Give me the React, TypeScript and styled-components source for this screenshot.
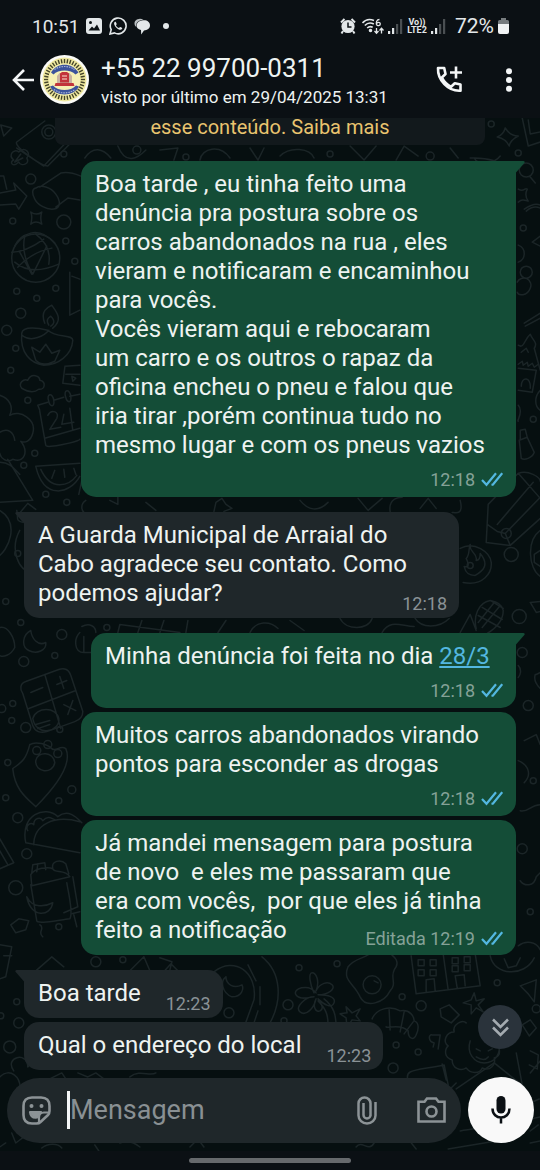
import React from 'react';
import styled, { createGlobalStyle } from 'styled-components';

const color = {
  bar: '#0b1014',
  chat: '#060f10',
  sent: '#144d37',
  received: '#1f272a',
  text: '#eef3f1',
  muted: '#8a9296',
  tick: '#53b7e0',
  doodle: '#1b2527',
};

const GlobalStyle = createGlobalStyle`
  * { box-sizing: border-box; }
  body { margin: 0; background: ${color.bar}; font-family: Roboto, "Noto Sans", sans-serif; }
  button { border: 0; padding: 0; background: none; color: inherit; cursor: pointer; display: flex; align-items: center; justify-content: center; }
  svg { display: block; flex: none; }
`;

const Screen = styled.div`
  min-height: 100vh;
  display: flex;
  flex-direction: column;
  background: ${color.bar};
  color: ${color.text};
`;

const StatusBar = styled.div`
  height: 50px;
  padding: 2px 31px 0 32px;
  display: flex;
  align-items: center;
  justify-content: space-between;
  color: #e3e7e9;
`;

const StatusGroup = styled.div<{ $gap: number; $size: number }>`
  display: flex;
  align-items: center;
  gap: ${(p) => p.$gap}px;
  font-size: ${(p) => p.$size}px;
`;

const NetworkLabel = styled.span`
  display: flex;
  flex-direction: column;
  align-items: center;
  font-size: 9px;
  line-height: 8px;
  font-weight: 700;
`;

const Header = styled.header`
  height: 68px;
  padding: 0 27px 9px 12px;
  display: flex;
  align-items: center;
`;

const BackButton = styled.button`
  width: 22px;
  margin-right: 6px;
`;

const Contact = styled.div`
  flex: 1;
  min-width: 0;
  margin-left: 12px;
  white-space: nowrap;
`;

const ContactName = styled.h1`
  margin: 0;
  font-size: 26px;
  line-height: 34px;
  font-weight: 400;
`;

const LastSeen = styled.p`
  margin: 0;
  font-size: 17px;
  line-height: 24px;
`;

const HeaderActions = styled.div`
  display: flex;
  align-items: center;
  gap: 42px;
`;

const Chat = styled.main`
  flex: 1;
  position: relative;
  overflow: hidden;
  display: flex;
  flex-direction: column;
  background: ${color.chat};
`;

const Wallpaper = styled.svg`
  position: absolute;
  top: 0;
  left: 0;
  width: 100%;
  height: 100%;
  fill: none;
  stroke: ${color.doodle};
  stroke-width: 1.5;
  stroke-linecap: round;
  stroke-linejoin: round;
`;

const Notice = styled.p`
  position: relative;
  margin: 0 55px 16px;
  padding-bottom: 9px;
  border-radius: 0 0 8px 8px;
  background: #12191c;
  color: #e9c46f;
  font-size: 20px;
  line-height: 18px;
  text-align: center;

  a { color: inherit; text-decoration: none; }
`;

const MessageList = styled.div`
  position: relative;
  flex: 1;
  padding: 0 24px;
  display: flex;
  flex-direction: column;
`;

type Placement = 'below' | 'over' | 'beside';
type Size = 'fit' | 'medium' | 'wide';

const bubbleWidth: Record<Size, string> = { fit: 'fit-content', medium: '425px', wide: '435px' };

const Bubble = styled.article<{ $sent: boolean; $tail: boolean; $size: Size; $meta: Placement }>`
  position: relative;
  align-self: ${(p) => (p.$sent ? 'flex-end' : 'flex-start')};
  width: ${(p) => bubbleWidth[p.$size]};
  max-width: 100%;
  margin-top: ${(p) => (p.$tail ? 15 : 4)}px;
  padding: 9px ${(p) => (p.$sent ? 13 : 12)}px ${(p) => (p.$meta === 'below' ? 6 : 10)}px 14px;
  border-radius: 15px;
  ${(p) => p.$tail && (p.$sent ? 'border-top-right-radius: 0;' : 'border-top-left-radius: 0;')}
  background: ${(p) => (p.$sent ? color.sent : color.received)};
  display: grid;
  grid-template-columns: ${(p) => (p.$meta === 'beside' ? 'auto auto' : '1fr')};
  column-gap: 25px;

  &:first-child { margin-top: 0; }
`;

const MessageText = styled.p`
  grid-area: 1 / 1;
  margin: 0;
  font-size: 24px;
  line-height: 29px;
  white-space: pre-wrap;

  a { color: ${color.tick}; text-underline-offset: 2px; text-decoration-thickness: 2px; }
`;

const Meta = styled.div<{ $placement: Placement; $sent: boolean }>`
  grid-area: ${(p) => ({ below: '2 / 1', over: '1 / 1', beside: '1 / 2' })[p.$placement]};
  align-self: end;
  justify-self: end;
  height: ${(p) => (p.$placement === 'below' ? 31 : 20)}px;
  margin-bottom: ${(p) => (p.$placement === 'below' ? 0 : p.$sent ? -5 : -7)}px;
  display: flex;
  align-items: flex-end;
  gap: 6px;
  font-size: 18px;
  line-height: 22px;
  color: ${(p) => (p.$sent ? '#85a297' : color.muted)};

  svg { margin-bottom: 4px; }
`;

const TailShape = styled.svg<{ $sent: boolean }>`
  position: absolute;
  top: 0;
  ${(p) => (p.$sent ? 'right: -9px;' : 'left: -9px; transform: scaleX(-1);')}
  fill: ${(p) => (p.$sent ? color.sent : color.received)};
`;

const JumpButton = styled.button`
  position: absolute;
  right: 18px;
  bottom: 102px;
  width: 44px;
  height: 44px;
  border-radius: 50%;
  background: #2a333b;
`;

const Composer = styled.form`
  position: relative;
  display: flex;
  align-items: center;
  gap: 7px;
  padding: 7px 6px 8px 7px;
`;

const InputPill = styled.div`
  flex: 1;
  min-width: 0;
  height: 65px;
  padding: 0 15px;
  border-radius: 33px;
  background: ${color.received};
  color: #8c9396;
  display: flex;
  align-items: center;
`;

const Caret = styled.span`
  flex: none;
  width: 3px;
  height: 38px;
  margin-left: 16px;
  background: #f3f5f6;
`;

const MessageInput = styled.input`
  flex: 1;
  min-width: 0;
  border: 0;
  padding: 0;
  outline: none;
  background: none;
  font: 400 27px/34px Roboto, "Noto Sans", sans-serif;
  color: ${color.text};

  &::placeholder { color: #899093; opacity: 1; }
`;

const PillActions = styled.div`
  display: flex;
  gap: 40px;
`;

const MicButton = styled.button`
  flex: none;
  width: 66px;
  height: 66px;
  border-radius: 50%;
  background: #f9f9f9;
`;

const NavigationBar = styled.footer`
  height: 20px;
  padding-top: 7px;
  display: flex;
  justify-content: center;
`;

const Handle = styled.span`
  width: 30%;
  height: 5px;
  border-radius: 3px;
  background: #66696c;
`;

const Ticks = () => (
  <svg width="22" height="15" viewBox="0 0 22 15" fill="none" stroke={color.tick} strokeWidth="2.2">
    <path d="M1 8 5.500 12.800 15 1.200M10.500 12.800 12 12.500 21.200 1.200" />
  </svg>
);

const Signal = () => (
  <svg width="15" height="15" viewBox="0 0 15 15">
    <path d="M0 12h2.2v3H0zM4 9h2.2v6H4z" fill="#e3e7e9" />
    <path d="M8 5h2.2v10H8zM12 0h2.2v15H12z" fill="#4a4f52" />
  </svg>
);

const Avatar = () => {
  const ticks = Array.from({ length: 40 }, (_, i) => i * 9);
  return (
    <svg width="49" height="49" viewBox="0 0 49 49" role="img" aria-label="Foto do contato">
      <circle cx="24.5" cy="24.5" r="24.5" fill="#fbfbf7" />
      <circle cx="24.5" cy="24.5" r="22" fill="#f0e9a0" />
      {ticks.map((a) => (
        <rect key={a} x="23.8" y="4" width="1.4" height="4.2" fill="#45452a" transform={`rotate(${a} 24.5 24.5)`} />
      ))}
      <circle cx="24.5" cy="24.5" r="15.8" fill="#f6f0b4" />
      <path d="M11 17.5C17 7 32 7 38.5 17.5L35.5 19.5C31 14 18 14 13.5 19.5z" fill="#3c539c" />
      <path d="M10 31.5 13 30.5C18 36.500 31 36.500 36 30.500L39 31.5C34 42 15 42 10 31.5z" fill="#3c539c" />
      <path d="M14.500 14.500C20 10.500 29 10.500 34.500 14.500M14 34.500C20 39 29 39 35 34.500" fill="none" stroke="#aab6d6" strokeWidth="1.2" strokeDasharray="1.500 1" />
      <path d="M17 28.500V21l2.500-3h10L32 21v7.500z" fill="#c9b3a0" />
      <path d="M20 27.500v-9l2-1.500h5l2 1.500v9zM15.500 28h18l1 3H14.500z" fill="#c2343b" />
      <path d="M22 21h5M22 24h5" stroke="#e9a9a0" strokeWidth="1.300" />
    </svg>
  );
};

/* Small rings scattered between the larger doodles: x, y, radius. */
const rings: number[][] = [
  [64, 154, 3], [31, 179, 5], [13, 221, 3], [64, 222, 7], [66, 241, 3], [75, 261, 3], [17, 291, 3], [56, 288, 3],
  [37, 298, 3], [21, 313, 5], [7, 330, 5], [16, 348, 3], [11, 370, 3], [28, 400, 3], [35, 453, 3], [24, 465, 3],
  [46, 494, 3], [67, 502, 3], [18, 553, 3], [6, 601, 3], [21, 622, 3], [62, 634, 5], [55, 655, 3], [24, 661, 5],
  [13, 703, 3], [2, 708, 4], [12, 720, 3], [26, 727, 5], [60, 729, 3], [8, 762, 3], [72, 789, 4], [6, 797, 3],
  [59, 800, 3], [18, 817, 5], [27, 853, 5], [16, 887, 7], [59, 926, 3], [96, 961, 5], [123, 959, 3], [17, 1001, 3],
  [1, 1015, 3], [19, 1022, 5], [10, 1046, 6], [229, 1012, 5], [284, 1020, 3], [288, 1004, 5], [299, 967, 3],
  [337, 963, 3], [402, 996, 3], [421, 1005, 5], [497, 982, 3], [396, 1044, 3], [418, 1051, 3], [393, 1067, 5],
  [491, 124, 3], [518, 153, 3], [523, 228, 3], [533, 419, 3], [489, 478, 3], [470, 493, 3], [506, 533, 5],
  [511, 554, 7], [470, 565, 3], [519, 616, 7], [522, 652, 5], [528, 705, 5], [533, 780, 3], [522, 848, 5],
  [530, 911, 3], [137, 150, 4], [186, 157, 3], [330, 154, 3], [430, 156, 4], [107, 627, 3], [536, 1008, 4],
];

const doodlePaths = [
  // camera and rose, top left
  'M17 142 45 121M17 142C13 146 42 166 48 166L82 132M17 148 44 166 80 128M1 125 12 128 4 136z',
  'M14 160c-6-5 0-12 5-8 6-6 13 1 8 6 4 6-6 9-8 4-6 6-10 0-5-2M21 154l-6 8m8-4-8 4',
  // arrow, can, star
  'M0 193 16 190 14 183 27 196 19 209 16 204 0 205M0 176l4 0 3 13',
  'M36 188c5-4 15-1 20 6s5 14-2 15-16-4-19-10-3-10 1-11M40 187 61 173c8-2 15 1 20 3M56 207l12-9 12 2',
  'M31 212q6 4 11 0-2 6 0 12-6-4-11 0 2-7 0-12M72 276l8 3M70 272v43l10-5',
  // ball
  'M15 246q4-10 16-13t24 10M18 267q14-15 34-19M12 252q14 0 32-13M25 236q-4 18 8 38M36 234q16 12 13 30M15 262q16 14 44 2M33 274l14-28M20 252l12 22',
  // lamp
  'M22 333c-2 20 9 30 22 32 14 0 28-10 29-25 0-6-16-2-25-10-8-2-25-5-26 3M22 335c10 8 23 0 27-5M45 323c-5-12 3-16 7-18 4 6 12 14 1 23M49 325c-3-5-1-7 2-9 5 5 3 8 0 10M32 347l8 5 6-8 6 9 8-3-5 11c-8 4-15 3-19-1z',
  // cloud, gift, tree
  'M22 388c-4-5 2-10 6-8 4-8 12-4 12 0 7 1 5 10-1 9-5 4-12 2-17-1M65 366l15-1M65 367l-2 16 17 2M66 374h14M72 376l4 2-3 3z',
  'M0 395c10 3 14 12 10 20 10-6 27 4 23 18-2 8-8 10-12 8 8 10 4 22-8 18-6 4-12-1-13-6M0 432c8-5 14 0 15 8M8 459l25 41-33 2M0 462c10 0 14 6 20 12',
  // calendar and melon
  'M40 410l-2-5 10-3M54 400l10-3M70 396l10-2M40 411l6 34c0 4 34-4 34-6M45 438l35-10M48 415c4-7 12-3 9 3l-7 11 11-2M64 414l-2 10 12-2M70 408l3 22M49 401c-3-8 4-9 5-1s-4 6-5 1M66 397c-3-8 4-9 5-1s-4 6-5 1',
  'M36 466c8 34 34 28 44 10M36 466l44-3M41 469c10 22 28 17 36 6M55 470l-3 8m12-9 1 8m9-9 2 6',
  // left side, middle
  'M0 510c20 12 10 40-4 48M17 510c2 8-2 10 6 12M20 530c-10 18-2 40 12 42 20 4 30 0 42-4M82 480l-3 14M18 515l10-12 8 6M110 500l8 4 0-8',
  'M0 627c8-2 15 10 15 20-4 8-12 10-15 8M31 630c-8 4-10 16-2 20s18 0 17-8c-8 4-14-4-15-12M80 632c-6 6-6 20 4 20h8M82 626c8-4 14 0 14 6M84 652l0-16',
  // calculator
  'M26 681c-6 2-6 8-3 12l10 32c2 6 8 8 14 6l28-10c6-2 8-6 8-10l-12-36c-2-6-6-8-12-6zM45 674l16 54M29 708l47-18M31 692l12-5M57 684l10-4M60 676l4 12M64 704l12 6M73 700l-5 14M36 724l14-4m-12 8 12-4M33 718c3-12 24-12 26 0s-22 20-26 0',
  // paw, taco
  'M30 744c-4 16-9 18-17 24 2 20 12 28 23 38 14-14 38-40 30-58-6-4-10 4-14 0s-16-8-22-4M36 760c2-10 18-9 19 2-2 12-20 10-19-2M33 750a4 4 0 1 1 8 0 4 4 0 1 1-8 0M44 744a4 4 0 1 1 8 0 4 4 0 1 1-8 0M54 753a4 4 0 1 1 8 0 4 4 0 1 1-8 0',
  'M26 842c-6-28 20-38 32-26 10-8 18 0 24 6M26 842l54 10M34 844c0-20 20-30 46-23M28 830c-3-5 3-9 6-6 0-7 7-8 9-4 5-6 9-2 12-1M0 838l14 24-14 6M0 850l8 14',
  // bottle and gloves
  'M31 874c4-7 18-8 22-6 2 5 12 0 17 8l-38 9zM31 884l6 36c0 4 30-2 33-2 4-6-2-28-3-36M32 872l1-8 12-2 1 7M38 863l-1 8M53 868c-2-8 8-10 13-5l3 10M27 896c4 22 24 20 26 6-8 4-20 6-26-6M73 876l5 30-14 6',
  'M11 924l8-6 10 2-3 9-10 3zM40 924c6 3-3 8 3 12M0 944l12 2-6 30-6 2M4 955h8M72 913l8-2M74 914l3 12M36 970l16-14 12 10M130 970l14-14 6 14z',
  // bottom left
  'M72 990l-6 8M14 1070c-10-14 14-20 14-4l6-6M0 1076c10-10 22 0 20 14M12 1132l4 10 8-6M0 1146l6-4M42 1147c6-5 16-5 20 0M95 1144l4 6M120 1142c8-3 14-1 20 4M50 1078l12-6 4 6M78 1072l10 4 8-4 8 6M130 1076c10-8 20 0 26-4M190 1146l8-8 6 8',
  // road and moon
  'M160 957l12 4-2 8M163 972l8-9 8 8M214 971c20-16 44 0 40 28l-8 22M262 956c20 16 20 44 8 66M248 964l8 16m4 6v18m-2 6-4 12M226 976c-6 4-4 16 6 20 10 0 12-8 10-12-8 4-16 0-16-8',
  // palm
  'M316 992c-8-10-24-4-20 2s14 2 18 2c-8 0-20 10-14 15s14-4 16-13c-4 8 0 14 4 12s2-6-2-12c6 6 14 10 16 4s-6-8-16-8c10 0 18-6 14-10s-12-2-16 6c4-10 0-18-4-18s-2 12 2 20M318 1000c8 8 10 14 10 24M324 998c10 8 12 16 12 28',
  // egg and building
  'M368 954c-6 4-14 4-20 12-6 14 6 16 12 30 6 12 24 6 30-6 8-8-2-14 6-24 4-8-6-12-6-14M363 984a9 9 0 1 1 18 0 9 9 0 1 1-18 0M374 980l4 2',
  'M411 955l5 38 64-8-5-32M443 953l5 36M426 991v-12l8-1 1 12M457 987l-2-12 9-1 1 11M418 959h6v6h-6zm12 0h6v6h-6zm-12 10h6v6h-6zm12 0h6v6h-6zM452 957h6v6h-6zm12-1h6v6h-6zm-12 9h6v6h-6zm12-1h6v6h-6z',
  'M490 955c4 20 34 22 44 2M504 958l4 9 8-2 4-8M520 985l16-6-2 22-6-8zM474 992l2 8 8-2-6 6 5 7-7-4-5 6 0-9-8-2 8-3zM440 1008l9-4 10 10-8 8-10-6zM522 1024l8-5 6 8-7 8z',
  // croissant, sparkle, pilcrow
  'M346 1006l6 6 8-4-4 7 4 5-8-1-5 8-1-10-6-4 7-1zM372 1018c4-10 18-14 28-8 10-2 14 6 14 10 6 2 4 10 2 14-2 6-8 4-8-4-8-8-20-2-22-4M389 1009l1 20M404 1011l-4 20M413 1021l-9 12M432 1034c-4-1-4 7 2 8l-1 4m7-12-2 14m2-14-8 0',
  // flower face
  'M466 1022c-4-4-14 2-12 9-8 0-12 10-6 14-4 4-4 12 4 14 0 8 8 12 14 8 4 6 14 6 16 0 8 4 14-4 12-10 8-2 6-12 0-14M470 1040c-4 12 4 22 14 22s18-8 14-22M476 1048l4 2m8 0 4-2M476 1056q8 5 12 0',
  'M408 1080c-4-12 6-10 36-16l4 20M442 1063l4 16M456 1088l38-26 30 24M516 1052l6 32M530 1050l8 4-1 14-8-4M456 1082l-14 14M540 1060l-10 12',
  'M356 1146c6-8 12 6 18-4M408 1138l8 10M460 1130c30-5 50-8 80-14M448 1148l60-10M530 1142l10-2M525 1104l14-6M538 1124l-8 6',
  // right side, top
  'M505 128q5 8 13 8-8 4-9 10-3-7-12-9 6-2 8-9M522 118l6 28 12-4M528 120l2 14 10-2M519 170a7 7 0 1 1 14 0 7 7 0 1 1-14 0M530 177l5 6M518 189c6 4 6-2 9 0-2 4-2 8 1 12-4-1-6-2-10 1M524 209c6-4 12-6 16-4M526 211q7-6 14-3',
  'M518 245c8 3 8 14 0 17M520 272a6 6 0 1 1 12 0 6 6 0 1 1-12 0M517 282a7 7 0 0 1 13 6c-3 8-12 8-13 4M540 236l-8 6 8 4M524 323l16-10M525 326l15-8M518 345c6 4 6-6 12-11 2 6 8 8 4 14l6 22M521 352l5-4 2 4',
  'M518 364l4-3 1 4 4-3 1 4 4-3 2 4 4-3M518 368l18 2-4 22-14-2M521 386c0-10 10-10 9 2M540 390c-6 6-6 16 0 20M518 405c6 6-2 16 0 16M519 440l8-3 7 15c-2 6-10 8-13 6zM520 439v-9l5-1 2 8M470 158c20-1 24 4 30 4M474 158c4 8 20 6 26-2',
  // pencil, fire, corn
  'M488 504l-2 38 24 3 30-27M488 504l30-31c10-4 22 4 22 8M497 524l36-42M518 473l22 25M510 545l-5-12-8-2-10-7M505 533l35-36M460 548c14-8 30 4 31 14s-8 24-28 20M470 544c-2 8 8 8 6 16 4 0 4-4 4-7 10 12 2 18-5 22-8 0-10-4-11-9 6 2 4-4 2-8 4-4 2-10 4-14',
  'M540 530c-14 10-12 38 0 46M540 550l-6 4v8l6 4M530 602l10-1M530 602l6 10 4-1M476 628c-3-12 2-26 14-28 6 1 12 4 13 10 0 10-8 18-16 23M478 615l22 12M482 607l20 12M490 600l13 8M500 605l-18 22M494 602l-16 20M460 632l10-18 6 16',
  'M536 674l4-2M535 674c-2 6 1 10 5 14M518 665c4 4 2 10 0 12M524 740l12-6 4 10M518 760c10 4 14 14 6 22M520 810c8 2 10-6 20-6M520 880c4 6 14 6 16-4l4-4M518 945c8-6 18-4 22 4',
  // bands visible between the bubbles
  'M85 158c8-12 18-10 26 0M118 146c8 20 20 12 28 4M160 150l18-2-4 12M200 160c2-12 20-16 30-2M250 148l8 12 6-12M280 156c10-10 30-8 34 2M350 146l14 14 12-14M396 160l8-14 14 10M450 148l8 10',
  'M86 500c-6 4-4 10-2 12M214 511l2-9 6-4 4 6 6 4-8 3M300 500c8 10 18 12 28 2M390 511c-2-14 10-14 12-14M460 500c4 16-6 12-8 12M358 498l10 12 14-12M146 502l10 8M420 508l8-10 8 10',
  'M118 632l2-8 60 8M142 620l-4 12M164 620l-4 12M188 620l-2 12M226 620l-8 12M250 632c6-12 20-12 28-4M340 618c6 12 28 12 32 0M382 632c8-14 20-6 32-6M415 618c6 10 24 10 34 0M290 620l14 10',
];

const ChatWallpaper = () => (
  <Wallpaper viewBox="0 118 540 1032" preserveAspectRatio="xMidYMin slice" aria-hidden="true">
    {rings.map(([x, y, r]) => (
      <circle key={`${x}-${y}`} cx={x} cy={y} r={r} />
    ))}
    <circle cx="49" cy="132" r="7" />
    <circle cx="49" cy="132" r="4" />
    <circle cx="36" cy="258" r="24" />
    {doodlePaths.map((d) => (
      <path key={d} d={d} />
    ))}
  </Wallpaper>
);

type MessageProps = {
  sent?: boolean;
  tail?: boolean;
  size?: Size;
  placement: Placement;
  time: string;
  children: React.ReactNode;
};

const Message = ({ sent = false, tail = false, size = 'fit', placement, time, children }: MessageProps) => (
  <Bubble $sent={sent} $tail={tail} $size={size} $meta={placement}>
    {tail && (
      <TailShape $sent={sent} width="10" height="12" viewBox="0 0 10 12" aria-hidden="true">
        <path d="M0 0h8.500q2 .5 .8 2L1 11.500H0z" />
      </TailShape>
    )}
    <MessageText>{children}</MessageText>
    <Meta $placement={placement} $sent={sent}>
      <span>{time}</span>
      {sent && <Ticks />}
    </Meta>
  </Bubble>
);

export default function App() {
  return (
    <Screen>
      <GlobalStyle />
      <StatusBar>
        <StatusGroup $gap={7} $size={19}>
          <span>10:51</span>
          <svg width="16" height="16" viewBox="0 0 16 16">
            <rect width="16" height="16" rx="3" fill="#e3e7e9" />
            <path d="M2.500 12.500 6 8.500l2 2 3-4 3 6z" fill={color.bar} />
            <circle cx="4.500" cy="4.500" r="1.500" fill={color.bar} />
          </svg>
          <svg width="18" height="18" viewBox="0 0 18 18" fill="none" stroke="#e3e7e9" strokeWidth="1.600">
            <path d="M1 17 2.200 12.600A7.900 7.900 0 1 1 5.500 15.900z" />
            <path d="M6 4.800c-1.700 1-.8 3.700 1.200 5.700s4.500 3.200 5.800 1.600c.6-.8.3-1.200-1.700-2-.8-.1-.9 1.100-1.500 1-1.200-.4-2.500-1.700-2.900-2.800 0-.5.9-.8.8-1.400C7 5 6.700 4.600 6 4.800z" fill="#e3e7e9" stroke="none" />
          </svg>
          <svg width="17" height="17" viewBox="0 0 17 17">
            <path d="M6 .8C2.800 1 .5 2.800.5 5.500c0 1.500.7 2.700 1.800 3.500C1.500 5 4 2.300 9.500 1.500 8.400 1 7.200.8 6 .8z" fill="#b9bec1" />
            <path d="M9 2.200c4.200-.4 7 1.800 7 5s-2.700 5-6 5.200L7.200 16.500 7 12C4 11.500 2.400 9.700 2.600 7.300 2.800 4.500 5.500 2.500 9 2.200z" fill="#e3e7e9" />
          </svg>
          <svg width="14" height="8" viewBox="0 0 14 8">
            <circle cx="8" cy="4" r="3" fill="#e3e7e9" />
          </svg>
        </StatusGroup>
        <StatusGroup $gap={4} $size={21}>
          <svg width="18" height="17" viewBox="0 0 18 17">
            <circle cx="8" cy="8.500" r="6.600" fill="#e3e7e9" />
            <path d="M1 4.500 4.500 1M15 4.500 11.500 1M3 13l-1.500 2.500M13 13l1.500 2.500" stroke="#e3e7e9" strokeWidth="2" />
            <path d="M8 4.500V9h3.500" stroke={color.bar} strokeWidth="1.500" fill="none" />
          </svg>
          <svg width="22" height="17" viewBox="0 0 22 17" fill="none" stroke="#e3e7e9" strokeWidth="1.600">
            <path d="M.5 5C3.500 1.500 8 .8 12 2.500M2.800 7.500c2.500-2.600 6-3 9-1.500M5.200 10c1.500-1.500 3.500-1.800 5.500-.8" />
            <circle cx="8.500" cy="12.500" r="1" fill="#e3e7e9" />
            <path d="M17.500 1.500c-3 0-3.500 3-3 5 .8 1.800 4 1.400 3.800-.7-.2-1.900-3-1.900-3.800-.2M14.500 10v5m-2-2 2 2.200 2-2.200M19.500 15.500v-5m-2 2 2-2.200 2 2.200" strokeWidth="1.300" />
          </svg>
          <Signal />
          <NetworkLabel>
            <span>Vo))</span>
            <span>LTE2</span>
          </NetworkLabel>
          <Signal />
          <span>&nbsp;72%</span>
          <svg width="11" height="16" viewBox="0 0 11 16">
            <path d="M3 0h5v2h1.500Q11 2 11 3.500V6H0V3.500Q0 2 1.500 2H3z" fill="#777c7f" />
            <path d="M0 6h11v8q0 2-2 2H2q-2 0-2-2z" fill="#f1f3f4" />
          </svg>
        </StatusGroup>
      </StatusBar>

      <Header>
        <BackButton aria-label="Voltar">
          <svg width="22" height="22" viewBox="0 0 22 22" fill="none" stroke="#f4f6f7" strokeWidth="2.600">
            <path d="M22 11H2M12 1 2 11l10 10" />
          </svg>
        </BackButton>
        <Avatar />
        <Contact>
          <ContactName>+55 22 99700-0311</ContactName>
          <LastSeen>visto por último em 29/04/2025 13:31</LastSeen>
        </Contact>
        <HeaderActions>
          <button aria-label="Adicionar chamada">
            <svg width="27" height="27" viewBox="0 0 27 27" fill="none" stroke="#f4f6f7" strokeWidth="2.600" strokeLinejoin="round">
              <path d="M2 2h6.200l1.300 6-3.600 3.500c2 4 5 7 9.200 9.300l3.700-3.600 5.700 1.200v6.300C12 25.500 1.500 14 2 2zM20 .5v12M14 6.500h12" />
            </svg>
          </button>
          <button aria-label="Mais opções">
            <svg width="8" height="24" viewBox="0 0 8 24" fill="#f4f6f7">
              <circle cx="4" cy="3.200" r="3" />
              <circle cx="4" cy="12" r="3" />
              <circle cx="4" cy="20.800" r="3" />
            </svg>
          </button>
        </HeaderActions>
      </Header>

      <Chat>
        <ChatWallpaper />
        <Notice>
          esse conteúdo. <a href="#saiba-mais">Saiba mais</a>
        </Notice>
        <MessageList>
          <Message sent tail size="wide" placement="below" time="12:18">
            {`Boa tarde , eu tinha feito uma
denúncia pra postura sobre os
carros abandonados na rua , eles
vieram e notificaram e encaminhou
para vocês.
Vocês vieram aqui e rebocaram
um carro e os outros o rapaz da
oficina encheu o pneu e falou que
iria tirar ,porém continua tudo no
mesmo lugar e com os pneus vazios`}
          </Message>
          <Message tail size="wide" placement="over" time="12:18">
            {`A Guarda Municipal de Arraial do
Cabo agradece seu contato. Como
podemos ajudar?`}
          </Message>
          <Message sent tail size="medium" placement="below" time="12:18">
            Minha denúncia foi feita no dia <a href="#28-3">28/3</a>
          </Message>
          <Message sent size="wide" placement="below" time="12:18">
            {`Muitos carros abandonados virando
pontos para esconder as drogas`}
          </Message>
          <Message sent size="wide" placement="over" time="Editada 12:19">
            {`Já mandei mensagem para postura
de novo  e eles me passaram que
era com vocês,  por que eles já tinha
feito a notificação`}
          </Message>
          <Message tail placement="beside" time="12:23">
            Boa tarde
          </Message>
          <Message placement="beside" time="12:23">
            Qual o endereço do local
          </Message>
        </MessageList>

        <Composer onSubmit={(e) => e.preventDefault()}>
          <InputPill>
            <button type="button" aria-label="Figurinhas">
              <svg width="29" height="29" viewBox="0 0 29 29" fill="none" stroke="currentColor" strokeWidth="2.600" strokeLinejoin="round">
                <path d="M27.500 15V10q0-8.500-8.500-8.500h-9Q1.500 1.500 1.500 10v9q0 8.500 8.500 8.500h4.500q2.500 0 4-1.500l7.500-7q1.500-1.500 1.500-4z" />
                <path d="M27 16.500h-5q-5 0-5 5V27M8 16h11c-2 0-4 2-4 5.500C11 22 8.500 20 8 16z" strokeWidth="2.200" />
                <path d="M8.500 16.500h9L15 21.500c-3 0-5.500-1.500-6.500-5z" fill="currentColor" stroke="none" />
                <circle cx="9.500" cy="10" r="2" fill="currentColor" stroke="none" />
                <circle cx="19.500" cy="10" r="2" fill="currentColor" stroke="none" />
              </svg>
            </button>
            <Caret />
            <MessageInput type="text" aria-label="Mensagem" placeholder="Mensagem" />
            <PillActions>
              <button type="button" aria-label="Anexar">
                <svg width="20" height="29" viewBox="0 0 20 29" fill="none" stroke="currentColor" strokeWidth="2.500">
                  <path d="M18.500 6v13.500a8.500 8 0 0 1-17 0V7.500a6 6 0 0 1 12 0V19a3.500 3.500 0 0 1-7 0V7M13.500 7v13" />
                </svg>
              </button>
              <button type="button" aria-label="Câmera">
                <svg width="29" height="26" viewBox="0 0 29 26" fill="none" stroke="currentColor" strokeWidth="2.600" strokeLinejoin="miter">
                  <path d="M1.500 4.800h6L10 1.500h9l2.500 3.300h6v19.700h-26z" />
                  <circle cx="14.500" cy="14.500" r="5" />
                </svg>
              </button>
            </PillActions>
          </InputPill>
          <MicButton type="button" aria-label="Gravar áudio">
            <svg width="20" height="28" viewBox="0 0 20 28" fill="none" stroke="#0b1014" strokeWidth="2.500">
              <rect x="5.500" y="0" width="9" height="17.500" rx="4.500" fill="#0b1014" stroke="none" />
              <path d="M1.500 12.500c0 12 17 12 17 0M10 21v6.500" />
            </svg>
          </MicButton>
        </Composer>

        <JumpButton aria-label="Ir para a última mensagem">
          <svg width="17" height="20" viewBox="0 0 17 20" fill="none" stroke="#a4abb0" strokeWidth="2.500">
            <path d="M1 2.500 8.500 10 16 2.500M1 10.500 8.500 18 16 10.500" />
          </svg>
        </JumpButton>
      </Chat>

      <NavigationBar>
        <Handle />
      </NavigationBar>
    </Screen>
  );
}
